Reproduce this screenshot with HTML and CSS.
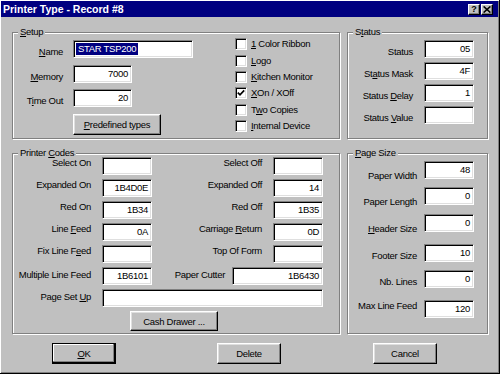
FILE: index.html
```html
<!DOCTYPE html>
<html>
<head>
<meta charset="utf-8">
<title>Printer Type - Record #8</title>
<link rel="stylesheet" href="styles.css">
</head>
<body>
<div class="window">
  <div class="titlebar">
    <span class="title">Printer Type - Record #8</span>
    <div class="caption-btns">
      <span class="cbtn help">?</span>
      <span class="cbtn close"><svg width="8" height="7" viewBox="0 0 8 7"><path d="M0.6 0.4 L7.4 6.6 M7.4 0.4 L0.6 6.6" stroke="#000" stroke-width="1.5"/></svg></span>
    </div>
  </div>

  <div class="groups">
    <section class="group setup">
      <div class="legend"><u>S</u>etup</div>
      <div class="setup-body">
        <div class="form-grid">
          <span class="lbl low"><u>N</u>ame</span>
          <div class="field name"><span class="sel">STAR TSP200</span></div>
          <span class="lbl low"><u>M</u>emory</span>
          <div class="field short">7000</div>
          <span class="lbl low">T<u>i</u>me Out</span>
          <div class="field short">20</div>
          <button class="btn predef"><u>P</u>redefined types</button>
        </div>
        <div class="checks">
          <div class="check"><span class="box"></span><span><u>1</u> Color Ribbon</span></div>
          <div class="check"><span class="box"></span><span><u>L</u>ogo</span></div>
          <div class="check"><span class="box"></span><span><u>K</u>itchen Monitor</span></div>
          <div class="check"><span class="box"><svg width="8" height="8" viewBox="0 0 8 8"><path d="M0.8 3.6 L3 5.8 L7.2 1.4" fill="none" stroke="#000" stroke-width="1.7"/></svg></span><span><u>X</u>On / XOff</span></div>
          <div class="check"><span class="box"></span><span>T<u>w</u>o Copies</span></div>
          <div class="check"><span class="box"></span><span><u>I</u>nternal Device</span></div>
        </div>
      </div>
    </section>

    <section class="group status">
      <div class="legend">S<u>t</u>atus</div>
      <div class="status-grid">
        <span class="lbl low">Status</span><div class="field">05</div>
        <span class="lbl low">St<u>a</u>tus Mask</span><div class="field">4F</div>
        <span class="lbl low">Status <u>D</u>elay</span><div class="field">1</div>
        <span class="lbl low">Status <u>V</u>alue</span><div class="field"></div>
      </div>
    </section>

    <section class="group codes">
      <div class="legend">Printer <u>C</u>odes</div>
      <div class="codes-grid">
        <span class="lbl top">Select On</span><div class="field"></div>
        <span class="lbl top">Select Off</span><div class="field"></div>

        <span class="lbl top">Expanded On</span><div class="field">1B4D0E</div>
        <span class="lbl top">Expanded Off</span><div class="field">14</div>

        <span class="lbl top">Red On</span><div class="field">1B34</div>
        <span class="lbl top">Red Off</span><div class="field">1B35</div>

        <span class="lbl top">Line <u>F</u>eed</span><div class="field">0A</div>
        <span class="lbl top">Carriage <u>R</u>eturn</span><div class="field">0D</div>

        <span class="lbl top">Fix Line F<u>e</u>ed</span><div class="field"></div>
        <span class="lbl top">Top Of Form</span><div class="field"></div>

        <span class="lbl mid">Multiple Line Feed</span><div class="field">1B6101</div>
        <div class="cutter"><span class="lbl">Paper Cutter</span><div class="field wide">1B6430</div></div>

        <span class="lbl mid">Page Set <u>U</u>p</span><div class="field span"></div>
      </div>
      <button class="btn cash">Cash Drawer ...</button>
    </section>

    <section class="group pagesize">
      <div class="legend"><u>P</u>age Size</div>
      <div class="ps-rows">
        <div class="ps-row"><span class="lbl lo">Paper Width</span><div class="field">48</div></div>
        <div class="ps-row"><span class="lbl lo">Paper Length</span><div class="field">0</div></div>
        <div class="ps-row"><span class="lbl lo"><u>H</u>eader Size</span><div class="field">0</div></div>
        <div class="ps-row"><span class="lbl lo2">Footer Size</span><div class="field">10</div></div>
        <div class="ps-row"><span class="lbl lo2">Nb. Lines</span><div class="field">0</div></div>
        <div class="ps-row"><span class="lbl hi">Max Line Feed</span><div class="field">120</div></div>
      </div>
    </section>
  </div>

  <div class="buttons">
    <button class="btn dlg default"><u>O</u>K</button>
    <button class="btn dlg del">Delete</button>
    <button class="btn dlg cancel">Cancel</button>
  </div>
</div>
</body>
</html>
```

FILE: styles.css
```css
html, body {
  margin: 0;
  padding: 0;
  background: #c0c0c0;
}

body {
  font-family: "Liberation Sans", Arial, sans-serif;
  font-size: 9.5px;
  letter-spacing: -0.3px;
  color: #000;
}

.window {
  box-sizing: border-box;
  width: 500px;
  height: 374px;
  padding: 1px 1px 0 1px;
  background: #c0c0c0;
  border-right: 1px solid #000;
  border-bottom: 1px solid #000;
  box-shadow: inset 1px 1px 0 #fff, inset -1px -1px 0 #808080;
  overflow: hidden;
}

/* Title bar */
.titlebar {
  height: 16px;
  background: #000080;
  display: flex;
  align-items: center;
  justify-content: space-between;
  padding: 0 5px 0 2px;
}

.title {
  color: #fff;
  font-weight: bold;
  font-size: 10.5px;
  letter-spacing: 0;
  line-height: 16px;
}

.caption-btns {
  display: flex;
  gap: 1px;
}

.cbtn {
  box-sizing: border-box;
  width: 12px;
  height: 11px;
  background: #c0c0c0;
  border: 1px solid;
  border-color: #fff #000 #000 #fff;
  box-shadow: inset -1px -1px 0 #808080;
  display: flex;
  align-items: center;
  justify-content: center;
  font-weight: bold;
  font-size: 9px;
  letter-spacing: 0;
  line-height: 9px;
}

/* Groups layout */
.groups {
  display: grid;
  grid-template-columns: 328px 141px;
  grid-template-rows: 107px 181px;
  column-gap: 7px;
  row-gap: 14px;
  margin: 15px 0 0 11px;
}

.group {
  box-sizing: border-box;
  border: 1px solid #808080;
  box-shadow: 1px 1px 0 #fff, inset 1px 1px 0 #fff;
}

.legend {
  width: max-content;
  height: 10px;
  line-height: 10px;
  margin: -6px 0 0 5px;
  padding: 0 2px;
  background: #c0c0c0;
}

.lbl {
  text-align: right;
  line-height: 12px;
  white-space: nowrap;
}

.lbl.low { align-self: end; }
.lbl.top { align-self: start; line-height: 9px; margin-top: 1px; }
.lbl.mid { align-self: center; margin-top: -2px; }

/* Fields */
.field {
  box-sizing: border-box;
  height: 18px;
  background: #fff;
  border: 1px solid;
  border-color: #808080 #fff #fff #808080;
  box-shadow: inset 1px 1px 0 #000, inset -1px -1px 0 #dfdfdf;
  display: flex;
  align-items: center;
  justify-content: flex-end;
  padding-right: 3px;
  line-height: 12px;
  white-space: nowrap;
}

.field.name {
  justify-content: flex-start;
  padding-left: 2px;
}

.sel {
  background: #000080;
  color: #fff;
  padding: 0 2px;
  line-height: 12px;
}

/* Buttons */
.btn {
  box-sizing: border-box;
  margin: 0;
  padding: 0;
  font-family: inherit;
  font-size: inherit;
  letter-spacing: inherit;
  color: #000;
  background: #c0c0c0;
  border: 1px solid;
  border-color: #fff #000 #000 #fff;
  box-shadow: inset -1px -1px 0 #808080, inset 1px 1px 0 #dfdfdf;
  display: flex;
  align-items: center;
  justify-content: center;
}

/* Setup group */
.setup-body {
  display: flex;
  align-items: flex-start;
}

.form-grid {
  display: grid;
  grid-template-columns: 50px 120px;
  grid-template-rows: 18px 18px 18px 21px;
  column-gap: 10px;
  row-gap: 6.5px;
  margin-top: 3px;
}

.field.short { width: 59px; }

.predef {
  grid-column: 2;
  width: 88px;
  height: 21px;
}

.checks {
  margin: -1px 0 0 42px;
  display: flex;
  flex-direction: column;
}

.check {
  height: 16.4px;
  display: flex;
  align-items: center;
  gap: 4px;
  line-height: 12px;
  white-space: nowrap;
}

.box {
  box-sizing: border-box;
  width: 12px;
  height: 12px;
  background: #fff;
  border: 1px solid;
  border-color: #808080 #fff #fff #808080;
  box-shadow: inset 1px 1px 0 #000, inset -1px -1px 0 #dfdfdf;
  display: flex;
  align-items: center;
  justify-content: center;
}

/* Status group */
.status-grid {
  display: grid;
  grid-template-columns: 65px 50px;
  grid-auto-rows: 18px;
  column-gap: 11px;
  row-gap: 4px;
  margin-top: 3px;
}

/* Printer codes group */
.codes-grid {
  display: grid;
  grid-template-columns: 78px 50px 99px 50px;
  grid-auto-rows: 18px;
  column-gap: 11px;
  row-gap: 4px;
  margin-top: -1px;
}

.cutter {
  grid-column: 3 / 5;
  display: flex;
  align-items: center;
  justify-content: flex-end;
}

.cutter .lbl {
  margin: -2px 7px 0 0;
}

.field.wide { width: 91px; }

.field.span { grid-column: 2 / 5; }

.cash {
  width: 88px;
  height: 20px;
  margin: 4px 0 0 117px;
}

/* Page size group */
.ps-rows {
  display: flex;
  flex-direction: column;
}

.ps-row {
  display: grid;
  grid-template-columns: 69px 50px;
  column-gap: 7px;
  height: 18px;
}

.ps-row:nth-child(1) { margin-top: 3px; }
.ps-row:nth-child(2) { margin-top: 8px; }
.ps-row:nth-child(3) { margin-top: 9px; }
.ps-row:nth-child(4) { margin-top: 12px; }
.ps-row:nth-child(5) { margin-top: 8px; }
.ps-row:nth-child(6) { margin-top: 12px; }

.ps-row .lbl { align-self: start; }
.ps-row .lbl.lo { margin-top: 9px; }
.ps-row .lbl.lo2 { margin-top: 6px; }
.ps-row .lbl.hi { margin-top: 0; }

/* Dialog buttons */
.buttons {
  display: flex;
  margin-top: 9px;
}

.dlg {
  width: 64px;
  height: 21px;
}

.default {
  margin-left: 51px;
  border-color: #000;
  box-shadow: inset -1px -1px 0 #000, inset -2px -2px 0 #808080, inset 1px 1px 0 #fff;
}

.del { margin-left: 101px; }
.cancel { margin-left: 92px; }
```
